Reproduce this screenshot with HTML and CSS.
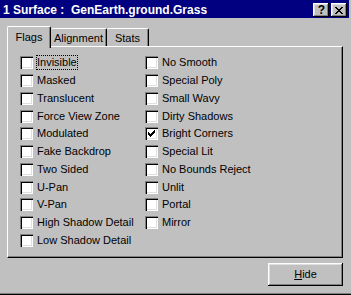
FILE: index.html
```html
<!DOCTYPE html>
<html lang="en">
<head>
    <meta charset="UTF-8">
    <title>1 Surface : GenEarth.ground.Grass</title>
    <link rel="stylesheet" href="styles.css">
</head>
<body>

<div class="window">
    <div class="titlebar">
        <div class="title">1 Surface :  GenEarth.ground.Grass</div>
        <div class="controls">
            <div class="ctl help">?</div>
            <div class="ctl">
                <svg width="8" height="7" viewBox="0 0 8 7" shape-rendering="crispEdges">
                    <path d="M0 0h2v1h-2zM6 0h2v1h-2zM1 1h2v1h-2zM5 1h2v1h-2zM2 2h4v1h-4zM3 3h2v1h-2zM2 4h4v1h-4zM1 5h2v1h-2zM5 5h2v1h-2zM0 6h2v1h-2zM6 6h2v1h-2z" fill="#000"/>
                </svg>
            </div>
        </div>
    </div>

    <div class="main">
        <div class="tabs">
            <div class="tab selected">Flags</div>
            <div class="tab alignment">Alignment</div>
            <div class="tab stats">Stats</div>
        </div>

        <div class="panel">
            <div class="check"><span class="box"></span><span class="label focus">Invisible</span></div>
            <div class="check"><span class="box"></span><span class="label">Masked</span></div>
            <div class="check"><span class="box"></span><span class="label">Translucent</span></div>
            <div class="check"><span class="box"></span><span class="label">Force View Zone</span></div>
            <div class="check"><span class="box"></span><span class="label">Modulated</span></div>
            <div class="check"><span class="box"></span><span class="label">Fake Backdrop</span></div>
            <div class="check"><span class="box"></span><span class="label">Two Sided</span></div>
            <div class="check"><span class="box"></span><span class="label">U-Pan</span></div>
            <div class="check"><span class="box"></span><span class="label">V-Pan</span></div>
            <div class="check"><span class="box"></span><span class="label">High Shadow Detail</span></div>
            <div class="check"><span class="box"></span><span class="label">Low Shadow Detail</span></div>

            <div class="check"><span class="box"></span><span class="label">No Smooth</span></div>
            <div class="check"><span class="box"></span><span class="label">Special Poly</span></div>
            <div class="check"><span class="box"></span><span class="label">Small Wavy</span></div>
            <div class="check"><span class="box"></span><span class="label">Dirty Shadows</span></div>
            <div class="check">
                <span class="box">
                    <svg width="9" height="9" viewBox="0 0 9 9" shape-rendering="crispEdges">
                        <path d="M1 3h1v3h-1zM2 4h1v3h-1zM3 5h1v3h-1zM4 4h1v3h-1zM5 3h1v3h-1zM6 2h1v3h-1zM7 1h1v3h-1z" fill="#000"/>
                    </svg>
                </span>
                <span class="label">Bright Corners</span>
            </div>
            <div class="check"><span class="box"></span><span class="label">Special Lit</span></div>
            <div class="check"><span class="box"></span><span class="label">No Bounds Reject</span></div>
            <div class="check"><span class="box"></span><span class="label">Unlit</span></div>
            <div class="check"><span class="box"></span><span class="label">Portal</span></div>
            <div class="check"><span class="box"></span><span class="label">Mirror</span></div>
        </div>

        <div class="footer">
            <div class="btn"><u>H</u>ide</div>
        </div>
    </div>
</div>

</body>
</html>
```

FILE: styles.css
```css
body {
    margin: 0;
    background-color: #c0c0c0;
    font-family: "Liberation Sans", Arial, sans-serif;
    font-size: 11px;
    color: #000;
}

.window {
    width: 351px;
    height: 295px;
    box-sizing: border-box;
    box-shadow: inset 0 -1px #000, inset 0 -2px #808080;
}

/* title bar */

.titlebar {
    height: 18px;
    margin-right: 2px;
    padding: 0 2px 0 3px;
    background-color: #000080;
    color: #fff;
    display: flex;
    align-items: flex-start;
}

.title {
    flex: 1;
    font-size: 12px;
    font-weight: bold;
    line-height: 14px;
    padding-top: 3px;
    white-space: pre;
}

.controls {
    display: flex;
    gap: 2px;
    margin-top: 3px;
}

.ctl {
    width: 16px;
    height: 14px;
    box-sizing: border-box;
    background-color: #c0c0c0;
    box-shadow: inset -1px -1px #000, inset 1px 1px #fff, inset -2px -2px #808080, inset 2px 2px #dfdfdf;
    display: flex;
    align-items: center;
    justify-content: center;
    color: #000;
}

.help {
    font-size: 12px;
    font-weight: bold;
    line-height: 12px;
    padding-left: 1px;
}

/* tabs */

.main {
    padding: 8px 8px 0 7px;
}

.tabs {
    display: flex;
    align-items: flex-end;
    height: 22px;
    margin-bottom: -2px;
    position: relative;
}

.tab {
    box-sizing: border-box;
    height: 18px;
    margin-bottom: 2px;
    padding-top: 2px;
    line-height: 14px;
    text-align: center;
    background-color: #c0c0c0;
    border-top: 1px solid #fff;
    border-left: 1px solid #fff;
    border-right: 1px solid #000;
    border-radius: 2px 2px 0 0;
    box-shadow: inset -1px 0 #808080;
}

.tab.selected {
    width: 44px;
    height: 22px;
    margin-bottom: 0;
    padding-top: 3px;
    z-index: 1;
}

.tab.alignment {
    width: 56px;
    border-left: none;
}

.tab.stats {
    width: 42px;
    border-left: none;
}

/* page */

.panel {
    height: 212px;
    box-sizing: border-box;
    border-top: 1px solid #fff;
    border-left: 1px solid #fff;
    border-right: 1px solid #000;
    border-bottom: 1px solid #000;
    box-shadow: inset -1px -1px #808080;
    padding: 7px 0 0 12px;
    display: grid;
    grid-template-columns: 125px auto;
    grid-template-rows: repeat(11, 17.75px);
    grid-auto-flow: column;
}

.check {
    display: flex;
    align-items: center;
    gap: 4px;
}

.box {
    flex: none;
    width: 13px;
    height: 13px;
    box-sizing: border-box;
    padding: 2px;
    background-color: #fff;
    box-shadow: inset 1px 1px #808080, inset 2px 2px #000, inset -1px -1px #fff, inset -2px -2px #dfdfdf;
}

.box svg {
    display: block;
}

.label {
    line-height: 13px;
    white-space: nowrap;
}

.focus {
    outline: 1px dotted #000;
}

/* buttons */

.footer {
    display: flex;
    justify-content: flex-end;
    padding-top: 5px;
}

.btn {
    width: 75px;
    height: 23px;
    box-sizing: border-box;
    line-height: 23px;
    text-align: center;
    box-shadow: inset -1px -1px #000, inset 1px 1px #fff, inset -2px -2px #808080, inset 2px 2px #dfdfdf;
}
```
